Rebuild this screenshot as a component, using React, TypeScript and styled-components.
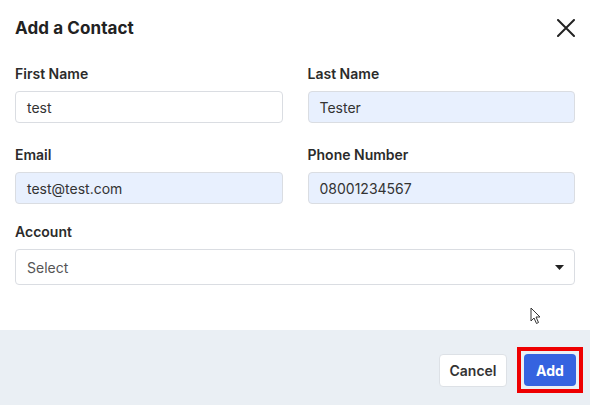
import React from "react";
import styled, { createGlobalStyle } from "styled-components";

const Global = createGlobalStyle`
  html, body { margin: 0; padding: 0; background: #fff; }
  body { font-family: Inter, "Open Sans", "Liberation Sans", sans-serif; -webkit-font-smoothing: antialiased; }
  * { box-sizing: border-box; }
`;

const Modal = styled.div`
  position: relative;
  width: 590px;
  height: 405px;
  background: #fff;
  display: flex;
  flex-direction: column;
  overflow: hidden;
`;

const Header = styled.div`
  height: 55px;
  padding: 0 14px 0 15px;
  display: flex;
  align-items: center;
  justify-content: space-between;
`;

const Title = styled.h2`
  margin: 0;
  font-size: 17px;
  font-weight: 700;
  color: #222;
  letter-spacing: 0.1px;
`;

const CloseButton = styled.button`
  border: 0;
  background: transparent;
  padding: 0;
  width: 20px;
  height: 20px;
  display: flex;
  align-items: center;
  justify-content: center;
  cursor: pointer;
`;

const Body = styled.div`
  flex: 1;
  padding: 10px 15px 0 15px;
  display: flex;
  flex-direction: column;
`;

const Row = styled.div<{ $cols: number; $mb: number }>`
  display: grid;
  grid-template-columns: ${(p) => (p.$cols === 2 ? "1fr 1fr" : "1fr")};
  column-gap: 25px;
  margin-bottom: ${(p) => p.$mb}px;
`;

const Field = styled.div`
  display: flex;
  flex-direction: column;
`;

const Label = styled.label`
  font-size: 14px;
  line-height: 18px;
  font-weight: 600;
  color: #2b2b2b;
  margin-bottom: 8px;
`;

const Input = styled.div<{ $filled?: boolean }>`
  height: 32px;
  border: 1px solid #dadde2;
  border-radius: 4px;
  background: ${(p) => (p.$filled ? "#e8f0fe" : "#fff")};
  padding: 0 11px;
  display: flex;
  align-items: center;
  font-size: 14px;
  color: #333;
`;

const Select = styled.div`
  height: 36px;
  border: 1px solid #dadde2;
  border-radius: 4px;
  background: #fff;
  padding: 0 10px 0 11px;
  display: flex;
  align-items: center;
  justify-content: space-between;
  font-size: 14px;
  color: #555;
`;

const Footer = styled.div`
  height: 75px;
  background: #eaeff4;
  display: flex;
  align-items: center;
  justify-content: flex-end;
  gap: 10px;
  padding: 5px 7px 0 0;
`;

const CancelButton = styled.button`
  height: 33px;
  width: 68px;
  border: 1px solid #dde1e6;
  border-radius: 4px;
  background: #fff;
  font-family: inherit;
  font-size: 14px;
  font-weight: 600;
  color: #333;
`;

const Highlight = styled.div`
  border: 4px solid #ee0000;
  padding: 3px;
`;

const AddButton = styled.button`
  height: 32px;
  width: 52px;
  border: 0;
  border-radius: 4px;
  background: #3563e0;
  font-family: inherit;
  font-size: 14px;
  font-weight: 700;
  color: #fff;
`;

const Cursor = styled.svg`
  position: absolute;
  left: 530px;
  top: 307px;
`;

export default function App() {
  return (
    <>
      <Global />
      <Modal>
        <Header>
          <Title>Add a Contact</Title>
          <CloseButton aria-label="Close">
            <svg width="18" height="18" viewBox="0 0 18 18">
              <path d="M1 1L17 17M17 1L1 17" stroke="#222" strokeWidth="2" strokeLinecap="round" />
            </svg>
          </CloseButton>
        </Header>
        <Body>
          <Row $cols={2} $mb={23}>
            <Field>
              <Label>First Name</Label>
              <Input>test</Input>
            </Field>
            <Field>
              <Label>Last Name</Label>
              <Input $filled>Tester</Input>
            </Field>
          </Row>
          <Row $cols={2} $mb={19}>
            <Field>
              <Label>Email</Label>
              <Input $filled>test@test.com</Input>
            </Field>
            <Field>
              <Label>Phone Number</Label>
              <Input $filled>08001234567</Input>
            </Field>
          </Row>
          <Row $cols={1} $mb={0}>
            <Field>
              <Label>Account</Label>
              <Select>
                <span>Select</span>
                <svg width="9" height="5" viewBox="0 0 9 5">
                  <path d="M0 0H9L4.5 5Z" fill="#222" />
                </svg>
              </Select>
            </Field>
          </Row>
        </Body>
        <Footer>
          <CancelButton>Cancel</CancelButton>
          <Highlight>
            <AddButton>Add</AddButton>
          </Highlight>
        </Footer>
        <Cursor width="12" height="18" viewBox="0 0 12 18">
          <path d="M1 1V14L4 11L6.5 16.5L8.5 15.5L6 10H10Z" fill="#fff" stroke="#333" strokeWidth="1" strokeLinejoin="round" />
        </Cursor>
      </Modal>
    </>
  );
}
